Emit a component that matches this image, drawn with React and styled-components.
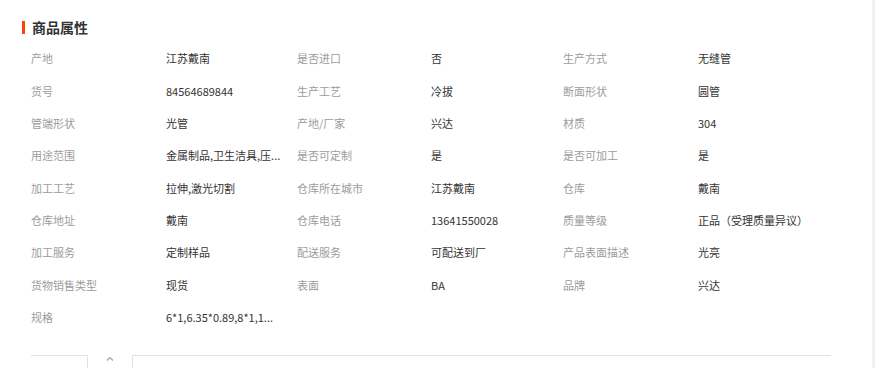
import React from 'react'
import styled, { createGlobalStyle } from 'styled-components'

const GlobalStyle = createGlobalStyle`
    body {
        margin: 0;
        background: #fff;
        font-family: "Microsoft YaHei", "Noto Sans CJK SC", sans-serif;
    }
`

const Page = styled.div`
    display: flex;
    height: 368px;
    overflow: hidden;
`

const Main = styled.div`
    flex: 1;
    padding: 20px 0 0 22px;
`

const Edge = styled.div`
    width: 3px;
    background: #f0f0f0;
`

const Title = styled.h2`
    display: flex;
    align-items: center;
    gap: 7px;
    margin: 0;
    height: 14px;
    font-size: 14px;
    line-height: 14px;
    font-weight: bold;
    color: #333;

    &::before {
        content: '';
        width: 3px;
        height: 13px;
        background: #ff4400;
    }
`

const Grid = styled.div`
    display: grid;
    grid-template-columns: 135px 131px 134px 132px 135px 131px;
    grid-auto-rows: 32.375px;
    margin: 8px 0 0 9px;
    font-size: 11px;
`

const Cell = styled.div`
    display: flex;
    align-items: center;
    white-space: nowrap;
    color: ${p => (p.$label ? '#9c9c9c' : '#333')};
`

const Tabs = styled.div`
    display: flex;
    margin: 22px 0 0 9px;
    height: 30px;
`

const TabLeft = styled.div`
    width: 56px;
    border-top: 1px solid #e3e3e3;
    border-right: 1px solid #e3e3e3;
`

const Toggle = styled.div`
    width: 44px;
    display: flex;
    justify-content: center;
    padding-top: 1px;
    color: #98a4b6;
`

const TabBody = styled.div`
    width: 698px;
    border-top: 1px solid #e3e3e3;
    border-left: 1px solid #e3e3e3;
`

const attrs = [
    ['产地', '江苏戴南'], ['是否进口', '否'], ['生产方式', '无缝管'],
    ['货号', '84564689844'], ['生产工艺', '冷拔'], ['断面形状', '圆管'],
    ['管端形状', '光管'], ['产地/厂家', '兴达'], ['材质', '304'],
    ['用途范围', '金属制品,卫生洁具,压...'], ['是否可定制', '是'], ['是否可加工', '是'],
    ['加工工艺', '拉伸,激光切割'], ['仓库所在城市', '江苏戴南'], ['仓库', '戴南'],
    ['仓库地址', '戴南'], ['仓库电话', '13641550028'], ['质量等级', '正品（受理质量异议）'],
    ['加工服务', '定制样品'], ['配送服务', '可配送到厂'], ['产品表面描述', '光亮'],
    ['货物销售类型', '现货'], ['表面', 'BA'], ['品牌', '兴达'],
    ['规格', '6*1,6.35*0.89,8*1,1...'],
]

const App = () => {
    return (
        <Page>
            <GlobalStyle />
            <Main>
                <Title>商品属性</Title>
                <Grid>
                    {attrs.map(([k, v]) => (
                        <React.Fragment key={k}>
                            <Cell $label>{k}</Cell>
                            <Cell>{v}</Cell>
                        </React.Fragment>
                    ))}
                </Grid>
                <Tabs>
                    <TabLeft />
                    <Toggle>
                        <svg width="8" height="5" viewBox="0 0 8 5">
                            <path d="M1 4.5 L4 1.5 L7 4.5" fill="none" stroke="currentColor" strokeWidth="1.2" />
                        </svg>
                    </Toggle>
                    <TabBody />
                </Tabs>
            </Main>
            <Edge />
        </Page>
    )
}

export default App
